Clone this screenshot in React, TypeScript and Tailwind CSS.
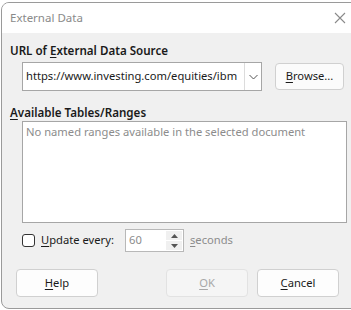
import React from "react";

const U = ({ c }: { c: string }) => <span className="underline underline-offset-2">{c}</span>;

export default function App() {
  return (
    <div
      className="w-[351px] h-[310px] bg-white overflow-hidden relative"
      style={{ fontFamily: '"Noto Sans", "Open Sans", sans-serif' }}
    >
      <div className="absolute left-[1px] top-[2px] w-[370px] h-[307px] rounded-lg border border-[#9a9a9a] bg-[#f0f0f0] overflow-hidden flex flex-col">
        {/* title bar */}
        <div className="h-[30px] bg-white flex items-center justify-between shrink-0">
          <span className="ml-[8px] text-[11.5px] text-[#8a8a8a]">External Data</span>
          <svg width="12" height="12" viewBox="0 0 12 12" className="mr-[24px]">
            <path d="M1 1 L11 11 M11 1 L1 11" stroke="#8a8a8a" strokeWidth="1.1" />
          </svg>
        </div>
        {/* body */}
        <div className="flex flex-col w-[350px] text-[11.2px] text-[#1a1a1a]">
          <div className="mt-[10px] ml-[8px] font-semibold text-[11.6px] leading-[16px]">
            URL of <U c="E" />xternal Data Source
          </div>
          <div className="flex items-center mt-[3px]">
            <div className="ml-[20px] w-[240px] h-[29px] bg-white border border-[#a6a6a6] flex items-center">
              <span className="ml-[3px] flex-1 whitespace-nowrap overflow-hidden">
                https://www.investing.com/equities/ibm
              </span>
              <div className="w-[17px] h-full border-l border-[#dcdcdc] flex items-center justify-center">
                <svg width="9" height="6" viewBox="0 0 9 6">
                  <path d="M0.5 1 L4.5 5 L8.5 1" stroke="#555" strokeWidth="1" fill="none" />
                </svg>
              </div>
            </div>
            <button className="ml-[13px] w-[69px] h-[27px] rounded-[4px] bg-[#fbfbfb] border border-[#d0d0d0] text-[#1a1a1a]">
              <U c="B" />rowse...
            </button>
          </div>
          <div className="mt-[14px] ml-[8px] font-semibold text-[11.6px] leading-[16px]">
            <U c="A" />vailable Tables/Ranges
          </div>
          <div className="ml-[20px] mt-[0px] w-[325px] h-[102px] bg-white border border-[#a6a6a6]">
            <div className="ml-[3px] mt-[2px] text-[#8c8c8c] whitespace-nowrap">
              No named ranges available in the selected document
            </div>
          </div>
          <div className="flex items-center mt-[6px] h-[23px]">
            <div className="ml-[20px] w-[13px] h-[13px] rounded-[3px] border border-[#333] bg-white" />
            <span className="ml-[6px] w-[80px]">
              <U c="U" />pdate every:
            </span>
            <div className="ml-[4px] w-[59px] h-[23px] bg-white border border-[#b8b8b8] flex items-center">
              <span className="ml-[3px] flex-1 text-[#8c8c8c]">60</span>
              <div className="w-[16px] h-full flex flex-col justify-center gap-[1px] mr-[1px]">
                <div className="h-[9px] bg-[#f0f0f0] flex items-center justify-center">
                  <svg width="7" height="4" viewBox="0 0 7 4"><path d="M0 4 L3.5 0 L7 4Z" fill="#555" /></svg>
                </div>
                <div className="h-[9px] bg-[#f0f0f0] flex items-center justify-center">
                  <svg width="7" height="4" viewBox="0 0 7 4"><path d="M0 0 L3.5 4 L7 0Z" fill="#555" /></svg>
                </div>
              </div>
            </div>
            <span className="ml-[6px] text-[#8c8c8c]">
              <U c="s" />econds
            </span>
          </div>
          <div className="flex mt-[17px]">
            <button className="ml-[14px] w-[82px] h-[28px] rounded-[4px] bg-[#fdfdfd] border border-[#d0d0d0]">
              <U c="H" />elp
            </button>
            <button className="ml-[68px] w-[82px] h-[28px] rounded-[4px] bg-[#f5f5f5] border border-[#e2e2e2] text-[#a8a8a8]">
              <U c="O" />K
            </button>
            <button className="ml-[9px] w-[82px] h-[28px] rounded-[4px] bg-[#fdfdfd] border border-[#d0d0d0]">
              <U c="C" />ancel
            </button>
          </div>
        </div>
      </div>
    </div>
  );
}
